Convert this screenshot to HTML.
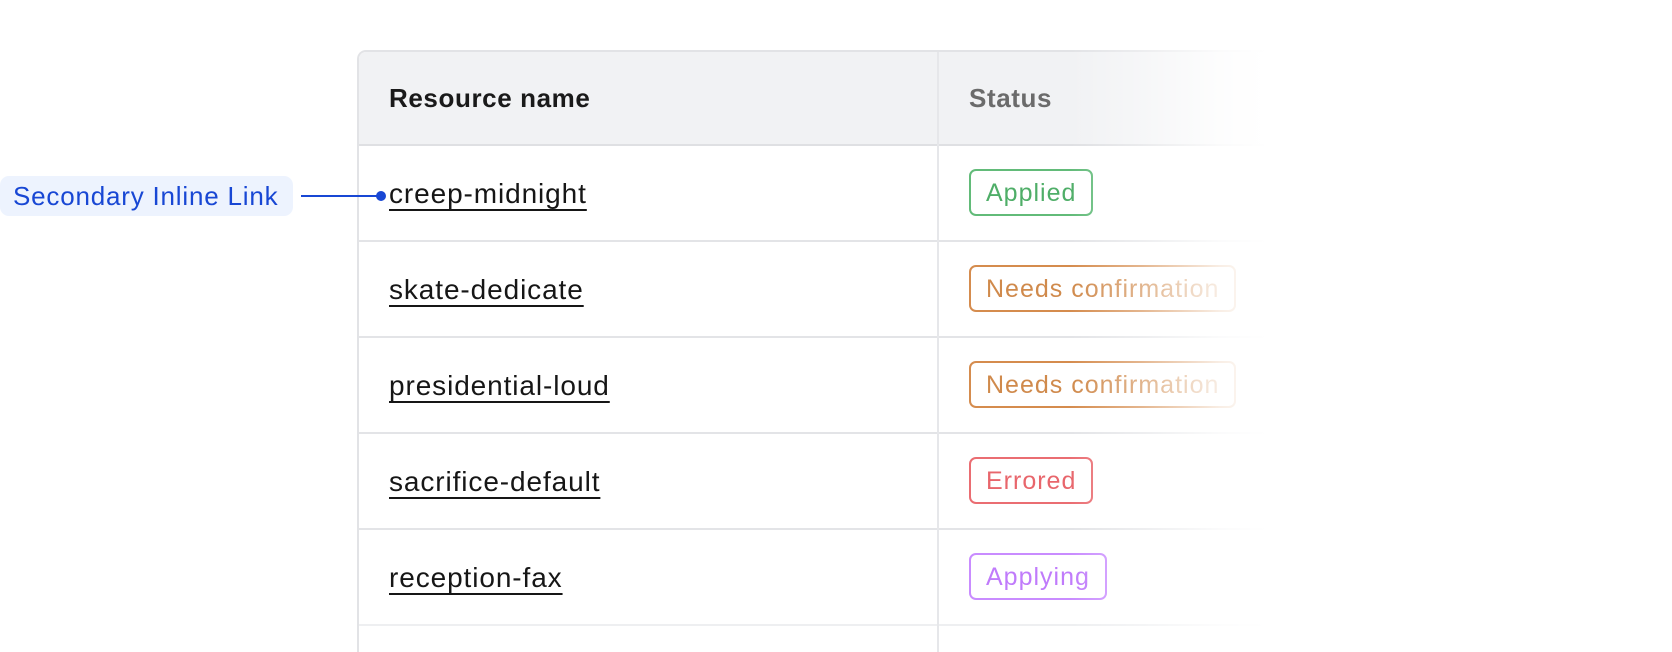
<!DOCTYPE html>
<html style="width:1672px;height:652px;overflow:hidden"><head><meta charset="utf-8"><style>
*{margin:0;padding:0;box-sizing:border-box}
body{width:1672px;height:652px;background:#fff;position:relative;overflow:hidden;font-family:"Liberation Sans",Arial,sans-serif}
.tbl{position:absolute;left:357px;top:50px;width:910px;height:602px;border:2px solid #e2e3e6;border-bottom:none;border-right:none;border-radius:9px 0 0 0;overflow:hidden}
.hdr{position:absolute;left:0;top:0;right:0;height:94px;background:#f1f2f4;border-bottom:2px solid #dfe0e3}
.vline{position:absolute;left:578px;top:0;width:2px;height:700px;background:#e6e7ea}
.row{position:absolute;left:0;right:0;height:96px;border-bottom:2px solid #e3e4e7}
.t{position:absolute;font-size:28px;letter-spacing:.9px;white-space:nowrap}
.h1{left:30px;top:31px;font-weight:bold;color:#1a1a1a;letter-spacing:.6px;font-size:26px}
.h2{left:610px;top:31px;color:#6b6b6b;font-weight:bold;letter-spacing:.6px;font-size:26px}
.lnk{left:30px;top:32px;color:#161616;text-decoration:underline;text-decoration-thickness:2px;text-underline-offset:6px}
.b{position:absolute;left:610px;top:23px;height:47px;border:2px solid;border-radius:7px;padding:0 15px;font-size:25px;line-height:44px;letter-spacing:1px;white-space:nowrap}
.fade{position:absolute;left:1070px;top:40px;width:230px;height:620px;background:linear-gradient(90deg,rgba(255,255,255,0) 0%,rgba(255,255,255,.35) 30%,rgba(255,255,255,.85) 65%,#fff 86%)}
.pill{position:absolute;left:0;top:176px;width:293px;height:40px;background:#edf3fe;border-radius:9px;color:#1847d4;font-size:26px;line-height:40px;padding-left:13px;letter-spacing:.8px}
.cl{position:absolute;left:301px;top:195px;width:80px;height:2px;background:#1847d4}
.dot{position:absolute;left:376px;top:191px;width:10px;height:10px;border-radius:50%;background:#1847d4}
</style></head><body>
<div class="tbl">
 <div class="hdr"><div class="t h1">Resource name</div><div class="t h2">Status</div></div>
 <div class="row" style="top:94px"><div class="t lnk">creep-midnight</div><div class="b" style="border-color:#62bb79;color:#4fae68">Applied</div></div>
 <div class="row" style="top:190px"><div class="t lnk">skate-dedicate</div><div class="b" style="border-color:#d58c4e;color:#d08a4c">Needs confirmation</div></div>
 <div class="row" style="top:286px"><div class="t lnk">presidential-loud</div><div class="b" style="border-color:#d58c4e;color:#d08a4c">Needs confirmation</div></div>
 <div class="row" style="top:382px"><div class="t lnk">sacrifice-default</div><div class="b" style="border-color:#ea6d72;color:#e8666c">Errored</div></div>
 <div class="row" style="top:478px;border-bottom-color:#eeeff1"><div class="t lnk">reception-fax</div><div class="b" style="border-color:#c98cff;color:#c07bfb">Applying</div></div>
 <div class="vline"></div>
</div>
<div class="fade"></div>
<div class="pill">Secondary Inline Link</div>
<div class="cl"></div><div class="dot"></div>
</body></html>
